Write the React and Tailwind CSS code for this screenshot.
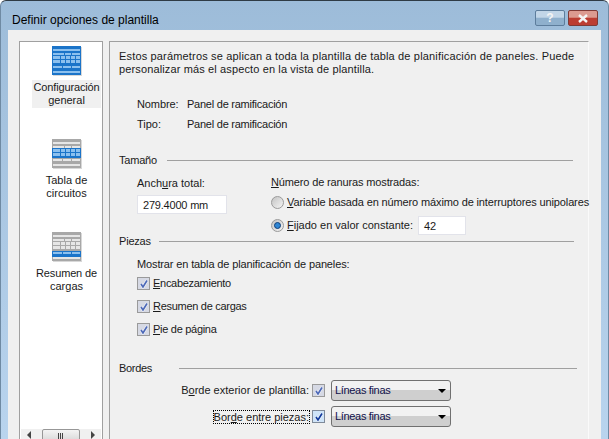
import React from 'react';

const BLUE = { band: '#1b74c9', fill: '#8cc0ee' };
const GRAY = { band: '#a8a8a8', fill: '#e6e6e6' };

// Table thumbnail split in four horizontal parts, each one can be blue or gray
function TableIcon({ head, grid, summary, foot }) {
  return (
    <svg width="30" height="30" viewBox="0 0 30 30" className="block">
      <rect x="1" y="1" width="29" height="29" fill="#d8d8d8" />
      <rect x="0" y="0" width="29" height="9" fill={head.band} />
      <rect x="0" y="9" width="29" height="10" fill={grid.band} />
      <rect x="0" y="19" width="29" height="6" fill={summary.band} />
      <rect x="0" y="25" width="29" height="4" fill={foot.band} />
      {/* head rows */}
      <rect x="1" y="3" width="27" height="2" fill={head.fill} />
      <rect x="1" y="7" width="11" height="2" fill={head.fill} />
      <rect x="13" y="7" width="6" height="2" fill={head.fill} />
      <rect x="20" y="7" width="8" height="2" fill={head.fill} />
      {/* grid */}
      <rect x="1" y="10" width="27" height="3" fill={grid.fill} />
      <rect x="1" y="14" width="27" height="3" fill={grid.fill} />
      <rect x="8" y="10" width="1" height="7" fill={grid.band} />
      <rect x="13" y="10" width="1" height="7" fill={grid.band} />
      <rect x="18" y="10" width="1" height="7" fill={grid.band} />
      <rect x="23" y="10" width="1" height="7" fill={grid.band} />
      {/* summary rows */}
      <rect x="1" y="20" width="9" height="2" fill={summary.fill} />
      <rect x="11" y="20" width="8" height="2" fill={summary.fill} />
      <rect x="20" y="20" width="8" height="2" fill={summary.fill} />
      {/* foot */}
      <rect x="1" y="25" width="27" height="2" fill={foot.fill} />
    </svg>
  );
}

function Section({ title, gap, className = '', tracking = '' }) {
  return (
    <div className={`flex items-center h-[13px] ${className}`}>
      <span className={tracking}>{title}</span>
      <div className={`flex-1 h-0 border-t border-[#a0a0a0] ${gap}`} />
    </div>
  );
}

function Check({ active }) {
  return (
    <span className={`w-[13px] h-[13px] shrink-0 border flex items-center justify-center ${active ? 'border-[#7f8a99] bg-[#cfe4f8]' : 'border-[#9a9a9a] bg-[#d6d9e4]'}`}>
      <svg width="10" height="10" viewBox="0 0 10 10">
        <path d="M2 5 L4 8 L8 1.5" fill="none" stroke="#ffffff" strokeWidth="3" opacity="0.7" />
        <path d="M2 5 L4 8 L8 1.5" fill="none" stroke={active ? '#123a9c' : '#4d69b8'} strokeWidth="1.7" />
      </svg>
    </span>
  );
}

function Radio({ on }) {
  return (
    <span className="w-[13px] h-[13px] shrink-0 rounded-full border border-[#9a9a9a] bg-gradient-to-br from-[#c4c4c4] to-[#f4f4f4] flex items-center justify-center">
      {on && <span className="w-[7px] h-[7px] rounded-full bg-[#2f86d4] border border-[#123f78]" />}
    </span>
  );
}

function Select() {
  return (
    <div className="w-[120px] h-[21px] rounded-[3px] border border-[#707070] bg-gradient-to-b from-[#f2f2f2] from-45% to-[#cfcfcf] to-50% flex items-center justify-between pl-[3px] pr-[4px] shrink-0">
      <span className="text-[#10104a] tracking-[-0.33px]">Líneas finas</span>
      <span className="w-0 h-0 border-x-[4px] border-x-transparent border-t-[4px] border-t-black" />
    </div>
  );
}

function SidebarItem({ children, selected, icon, className = '' }) {
  return (
    <div className={`flex flex-col items-center w-[69px] ml-[12px] ${className}`}>
      {icon}
      <div className={`mt-[4px] w-full text-center leading-[13px] py-[1px] ${selected ? 'bg-[#f0f0f0]' : ''}`}>
        {children}
      </div>
    </div>
  );
}

export default function App() {
  return (
    <div className="w-[609px] h-[439px] overflow-hidden bg-gradient-to-b from-[#9dbcd9] to-[#b9d4ee] border-t border-t-[#2f3b45] border-x border-x-[#6f8aa3] rounded-t-[6px] flex flex-col text-[11px] text-[#1a1a1a] [font-family:'Liberation_Sans',sans-serif]">
      {/* title bar */}
      <div className="h-[29px] shrink-0 flex items-start justify-between pl-[11px] pr-[10px] pt-[9px]">
        <span className="text-[12px] leading-[16px] mt-[2px] text-black">Definir opciones de plantilla</span>
        <div className="flex gap-[3px]">
          <div className="w-[30px] h-[16px] rounded-[2px] border border-[#5d7d9c] bg-gradient-to-b from-[#c2d6e8] from-45% to-[#8fb0cd] to-50% flex items-center justify-center text-[#f4f4f4] font-bold text-[12px] leading-none">?</div>
          <div className="w-[30px] h-[16px] rounded-[2px] border border-[#7f3a36] bg-gradient-to-b from-[#dc9a90] from-45% to-[#bc3d32] to-50% flex items-center justify-center">
            <svg width="12" height="9" viewBox="0 0 12 9">
              <path d="M2 1 L10 8 M10 1 L2 8" stroke="#f4f4f4" strokeWidth="2.4" />
            </svg>
          </div>
        </div>
      </div>

      {/* client area */}
      <div className="flex-1 ml-[7px] mr-[7px] bg-[#f0f0f0] pl-[11px] pr-[12px] pt-[11px] flex gap-[6px] min-h-0">
        {/* left list */}
        <div className="w-[84px] shrink-0 bg-white border border-b-0 border-[#a0a0a0] flex flex-col relative">
          <div className="flex-1 pt-[4px]">
            <SidebarItem selected icon={<TableIcon head={BLUE} grid={BLUE} summary={BLUE} foot={BLUE} />}>
              <span className="tracking-[-0.15px]">Configuración</span><br />general
            </SidebarItem>
            <SidebarItem className="mt-[31px]" icon={<TableIcon head={GRAY} grid={BLUE} summary={GRAY} foot={GRAY} />}>
              Tabla de<br />circuitos
            </SidebarItem>
            <SidebarItem className="mt-[31px]" icon={<TableIcon head={GRAY} grid={GRAY} summary={BLUE} foot={GRAY} />}>
              <span className="tracking-[-0.15px]">Resumen de</span><br />cargas
            </SidebarItem>
          </div>
          {/* horizontal scrollbar */}
          <div className="h-[10px] flex items-start justify-between pl-[6px] pr-[6px] mx-[1px] bg-[#f0f0f0] overflow-hidden">
            <span className="mt-[2px] w-0 h-0 border-y-[4px] border-y-transparent border-r-[4px] border-r-[#444]" />
            <div className="w-[38px] h-[13px] -ml-[1px] rounded-[2px] border border-[#979797] bg-gradient-to-b from-[#f4f4f4] to-[#d8d8d8] flex justify-center gap-[1px] pt-[3px]">
              <span className="w-[1px] h-[6px] bg-[#444]" />
              <span className="w-[1px] h-[6px] bg-[#444]" />
              <span className="w-[1px] h-[6px] bg-[#444]" />
            </div>
            <span className="mt-[2px] w-0 h-0 border-y-[4px] border-y-transparent border-l-[4px] border-l-[#444]" />
          </div>
        </div>

        {/* right panel */}
        <div className="flex-1 border-t border-l border-[#a0a0a0] border-r border-r-[#fafafa] pt-[8px] pl-[9px] pr-[14px] min-w-0 whitespace-nowrap">
          <p className="leading-[13px]">
            <span className="tracking-[0.165px]">Estos parámetros se aplican a toda la plantilla de tabla de planificación de paneles. Puede</span><br />
            <span className="tracking-[0.13px]">personalizar más el aspecto en la vista de plantilla.</span>
          </p>

          <div className="mt-[22px] ml-[18px] grid grid-cols-[50px_1fr] gap-y-[7px] leading-[13px]">
            <span className="tracking-[-0.1px]">Nombre:</span><span className="tracking-[-0.24px]">Panel de ramificación</span>
            <span>Tipo:</span><span className="tracking-[-0.24px]">Panel de ramificación</span>
          </div>

          <Section className="mt-[23px]" title="Tamaño" tracking="tracking-[-0.2px]" gap="ml-[10px] mr-[1px]" />
          <div className="flex mt-[9px] ml-[18px]">
            <div className="w-[134px] shrink-0">
              <div className="leading-[13px] mt-[1px]">Anch<u>u</u>ra total:</div>
              <div className="mt-[5px] w-[90px] h-[19px] bg-white border border-[#e2e3ea] pl-[5px] leading-[18px] tracking-[-0.2px]">279.4000 mm</div>
            </div>
            <div className="min-w-0">
              <div className="leading-[13px] tracking-[-0.14px]"><u>N</u>úmero de ranuras mostradas:</div>
              <div className="flex items-center gap-[3px] mt-[7px] leading-[13px]">
                <Radio /><span className="tracking-[-0.13px]"><u>V</u>ariable basada en número máximo de interruptores unipolares</span>
              </div>
              <div className="flex items-center mt-[7px]">
                <Radio on />
                <span className="ml-[3px] w-[131px]"><u>F</u>ijado en valor constante:</span>
                <div className="w-[48px] h-[19px] bg-white border border-[#e2e3ea] pl-[5px] leading-[18px]">42</div>
              </div>
            </div>
          </div>

          <Section title="Piezas" tracking="tracking-[-0.2px]" gap="ml-[8px]" />
          <div className="ml-[18px] mt-[10px] leading-[13px] tracking-[-0.13px]">Mostrar en tabla de planificación de paneles:</div>
          <div className="ml-[18px] mt-[6px] flex flex-col gap-[10px] leading-[13px] tracking-[-0.29px]">
            <div className="flex items-center gap-[3px]"><Check /><span><u>E</u>ncabezamiento</span></div>
            <div className="flex items-center gap-[3px]"><Check /><span><u>R</u>esumen de cargas</span></div>
            <div className="flex items-center gap-[3px]"><Check /><span><u>P</u>ie de página</span></div>
          </div>

          <Section className="mt-[26px]" title="Bordes" tracking="tracking-[-0.3px]" gap="ml-[27px] -mr-[3px]" />
          <div className="mt-[5px] flex flex-col gap-[5px] items-end w-[332px]">
            <div className="flex items-center">
              <span>B<u>o</u>rde exterior de plantilla:</span>
              <span className="ml-[3px]"><Check /></span>
              <span className="ml-[6px]"><Select /></span>
            </div>
            <div className="flex items-center">
              <span className="border border-dotted border-black leading-[12px]">Bor<u>d</u>e entre piezas:</span>
              <span className="ml-[2px]"><Check active /></span>
              <span className="ml-[6px]"><Select /></span>
            </div>
          </div>
        </div>
      </div>
    </div>
  );
}
